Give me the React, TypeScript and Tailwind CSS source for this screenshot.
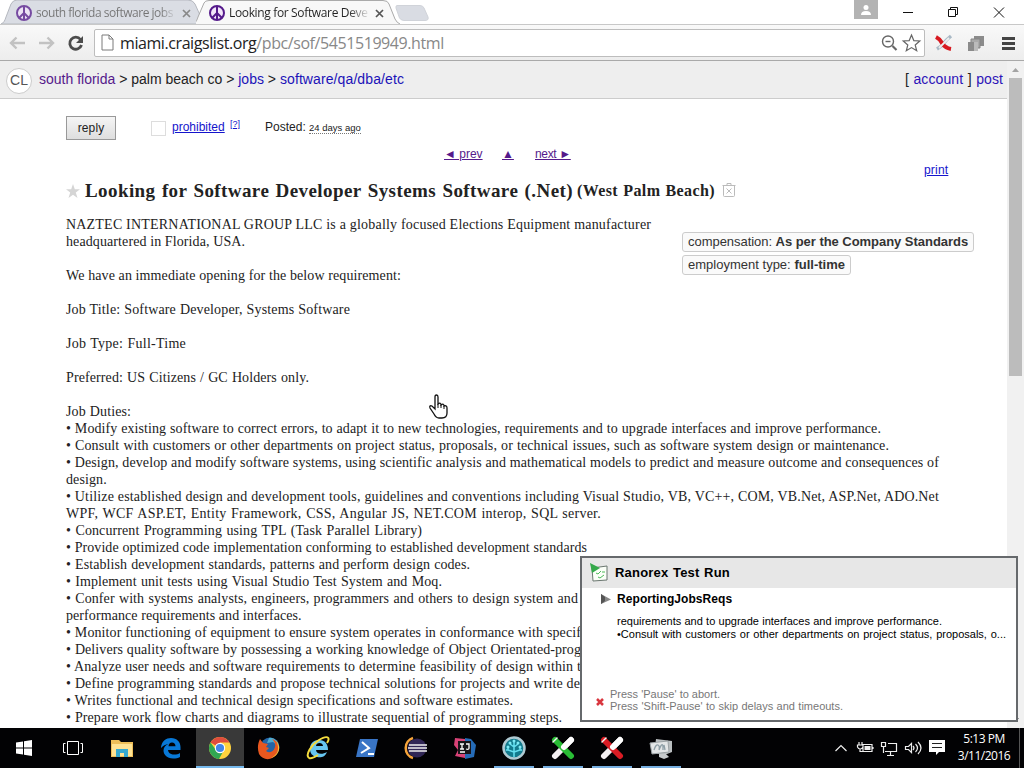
import React from "react";

const Peace = ({ faded = false }: { faded?: boolean }) => (
  <svg className={`h-4 w-4 shrink-0 ${faded ? "opacity-75" : ""}`} viewBox="0 0 16 16" fill="none" stroke="#551a8b" strokeWidth="2">
    <circle cx="8" cy="8" r="7" fill="#f3e6fa" />
    <path d="M8 1v14M8 8l-5 5M8 8l5 5" />
  </svg>
);

const TabClose = ({ color }: { color: string }) => (
  <svg className="h-[9px] w-[9px] shrink-0" viewBox="0 0 9 9" stroke={color} strokeWidth="1.7">
    <path d="M1 1l7 7M8 1l-7 7" />
  </svg>
);

const Tabs = () => (
  <div className="flex h-6 bg-white">
    <div className="relative flex h-6 w-[196px] items-center pl-4">
      <svg className="absolute top-0 left-0 h-6 w-[206px]" viewBox="0 0 206 24">
        <path d="M1 24C4 23 5 20 6 17L11 4Q13 0 17 0H188Q193 0 195 4L204 24Z" fill="#dadde4" stroke="#b5b8bf" />
      </svg>
      <div className="relative flex items-center pt-0.5">
        <Peace faded />
        <div className="ml-1 w-[141px] whitespace-nowrap bg-gradient-to-r from-[#747474] from-88% to-transparent bg-clip-text font-['Open_Sans',sans-serif] text-[12px] leading-5 tracking-[-0.47px] text-transparent">south florida software jobs</div>
        <div className="ml-[5px]"><TabClose color="#888" /></div>
      </div>
    </div>
    <div className="relative flex h-6 w-[198px] items-center pl-[13px]">
      <svg className="absolute top-0 left-0 h-6 w-[204px]" viewBox="0 0 204 24">
        <path d="M-4 24C0 23 1 20 2 17L8 3Q9 .5 13 .5H187Q192 .5 193 4L199 19Q201 23 204 24" fill="#f8f8f8" stroke="#aaa" />
      </svg>
      <div className="relative flex items-center pt-0.5">
        <Peace />
        <div className="ml-1 w-[141px] whitespace-nowrap bg-gradient-to-r from-[#222] from-85% to-transparent bg-clip-text font-['Open_Sans',sans-serif] text-[12px] leading-5 tracking-[-0.35px] text-transparent">Looking for Software Deve</div>
        <div className="ml-[5px]"><TabClose color="#555" /></div>
      </div>
    </div>
    <svg className="relative mt-[5px] h-4 w-9" viewBox="0 0 36 16">
      <path d="M3 .5H26Q29 .5 30 3L34 12Q35 15.500 31 15.500H10Q7 15.500 5.500 13L2 3Q1.500 .5 3 .5Z" fill="#d9dce3" stroke="#d0d3d9" />
    </svg>
    <div className="ml-auto flex">
      <div className="flex h-[19px] w-6 items-center justify-center bg-[#b3b3b3]">
        <svg className="h-3 w-3" viewBox="0 0 12 12" fill="#fff"><circle cx="6" cy="3.500" r="2.500" /><path d="M1 11q0-4 5-4t5 4z" /></svg>
      </div>
      <svg className="h-6 w-[146px]" viewBox="878 0 146 24" fill="none" stroke="#111">
        <path d="M903 12.500H913M948.500 9.500h7v7h-7zM950.500 9v-1.500h7v7h-1.500M994 7.500l10 10M1004 7.500l-10 10" />
      </svg>
    </div>
  </div>
);

const Toolbar = () => (
  <div className="flex h-[37px] items-center border-t border-b border-t-[#c8c8c8] border-b-[#a9a9a9] bg-gradient-to-b from-[#f9f9f9] to-[#ededed]">
    <svg className="h-9 w-[94px]" viewBox="0 24 94 36" fill="none" stroke="#c2c2c2" strokeWidth="2.400">
      <path d="M25 42H11M16.500 36.500L11 42l5.500 5.500M39 42h14M47.500 36.500L53 42l-5.500 5.500" />
      <path d="M80.500 38.500A6 6 0 1 0 81.500 44" stroke="#4c4c4c" strokeWidth="2.800" />
      <path d="M83 35v7h-7z" fill="#4c4c4c" stroke="none" />
    </svg>
    <div className="flex h-7 w-[831px] items-center rounded-[2px] border border-[#bdbdbd] bg-white pl-1.5">
      <svg className="h-[17px] w-[13px]" viewBox="0 0 13 17" fill="#fff" stroke="#7b7b7b"><path d="M1 1h7l4 4v11H1zM8 1v4h4" /></svg>
      <div className="ml-[6px] whitespace-nowrap font-['Open_Sans',sans-serif] text-[16px] leading-6 tracking-[-0.42px] text-[#888]"><span className="text-[#222]">miami.craigslist.org</span>/pbc/sof/5451519949.html</div>
      <svg className="ml-auto h-6 w-[46px]" viewBox="878 30 46 24" fill="none" stroke="#666" strokeWidth="1.400">
        <circle cx="888" cy="40.500" r="5.500" /><path d="M885.500 40.500h5" /><path d="M892.500 45l4 4" strokeWidth="2.200" />
        <path d="M911.500 34l2.300 5.600 6 .4-4.600 4 1.500 5.800-5.200-3.200-5.200 3.200 1.500-5.800-4.600-4 6-.4z" strokeWidth="1.200" />
      </svg>
    </div>
    <svg className="h-9 w-[99px]" viewBox="925 24 99 36">
      <path d="M951 35q-5 4-7 7t-7 6" fill="none" stroke="#a9b9c6" strokeWidth="3.500" />
      <path d="M936 36q4 2 6 6 3 5 9 6" fill="none" stroke="#d71920" strokeWidth="4" />
      <path d="M939 47l10-10" stroke="#eee" strokeWidth="1.800" />
      <path d="M974 35h10v10h-10z" fill="#8b8b8b" /><path d="M971 38h9v9h-9z" fill="#aaa" stroke="#858585" /><path d="M968 41h8v9h-8z" fill="#8b8b8b" /><path d="M974 41h4v9h-4z" fill="#bbb" />
      <path d="M1002 37.500h13M1002 42.500h13M1002 47.500h13" stroke="#444" strokeWidth="2.800" />
    </svg>
  </div>
);

const lines: [string, string][] = [
  ["NAZTEC INTERNATIONAL GROUP LLC is a globally focused Elections Equipment manufacturer", "w-[585px] tracking-[0.2px]"],
  ["headquartered in Florida, USA.", "w-[178px] tracking-[0.1px]"],
  ["", ""],
  ["We have an immediate opening for the below requirement:", "w-[335px] tracking-[0.1px]"],
  ["", ""],
  ["Job Title: Software Developer, Systems Software", "w-[284px] tracking-[0.15px]"],
  ["", ""],
  ["Job Type: Full-Time", "w-[120px] tracking-[0.25px]"],
  ["", ""],
  ["Preferred: US Citizens / GC Holders only.", "w-[243px] tracking-[0.1px]"],
  ["", ""],
  ["Job Duties:", "w-[65px] tracking-[0.1px]"],
  ["• Modify existing software to correct errors, to adapt it to new technologies, requirements and to upgrade interfaces and improve performance.", "w-[815px] tracking-[0.08px]"],
  ["• Consult with customers or other departments on project status, proposals, or technical issues, such as software system design or maintenance.", "w-[823px] tracking-[0.08px]"],
  ["• Design, develop and modify software systems, using scientific analysis and mathematical models to predict and measure outcome and consequences of", "w-[873px] tracking-[0.1px]"],
  ["design.", "w-[40px] tracking-[0.1px]"],
  ["• Utilize established design and development tools, guidelines and conventions including Visual Studio, VB, VC++, COM, VB.Net, ASP.Net, ADO.Net", "w-[873px] tracking-[0.15px]"],
  ["WPF, WCF ASP.ET, Entity Framework, CSS, Angular JS, NET.COM interop, SQL server.", "w-[535px] tracking-[0.25px]"],
  ["• Concurrent Programming using TPL (Task Parallel Library)", "w-[356px] tracking-[0.1px]"],
  ["• Provide optimized code implementation conforming to established development standards", "w-[521px] tracking-[0.06px]"],
  ["• Establish development standards, patterns and perform design codes.", "w-[404px] tracking-[0.08px]"],
  ["• Implement unit tests using Visual Studio Test System and Moq.", "w-[376px] tracking-[0.08px]"],
  ["• Confer with systems analysts, engineers, programmers and others to design system and", "w-[512px] tracking-[0.08px]"],
  ["performance requirements and interfaces.", "w-[235px] tracking-[0.08px]"],
  ["• Monitor functioning of equipment to ensure system operates in conformance with specifi", "w-[519px] tracking-[0.1px]"],
  ["• Delivers quality software by possessing a working knowledge of Object Orientated-prog", "w-[515px] tracking-[0.08px]"],
  ["• Analyze user needs and software requirements to determine feasibility of design within t", "w-[515px] tracking-[0.08px]"],
  ["• Define programming standards and propose technical solutions for projects and write de", "w-[514px] tracking-[0.08px]"],
  ["• Writes functional and technical design specifications and software estimates.", "w-[447px] tracking-[0.08px]"],
  ["• Prepare work flow charts and diagrams to illustrate sequential of programming steps.", "w-[496px] tracking-[0.08px]"],
];

const Posting = () => (
  <main className="h-[629px] overflow-hidden bg-white pt-[17px] pl-[66px]">
    <div className="flex h-6 items-center text-[12px]">
      <button className="h-6 w-[50px] border border-[#999] bg-gradient-to-b from-[#f5f5f5] to-[#dedede] text-[12px] tracking-[0.1px]">reply</button>
      <div className="ml-[35px] h-[15px] w-[15px] border border-[#ddd]" />
      <a className="ml-[6px] w-[55px] -translate-y-px whitespace-nowrap text-[#1414cc] underline">prohibited</a>
      <a className="ml-[3px] -translate-y-[4px] text-[9px] leading-3 text-[#1414cc] underline">[?]</a>
      <span className="ml-[25px] w-[41px] -translate-y-px whitespace-nowrap">Posted:</span>
      <span className="ml-[3px] border-b border-dotted border-[#777] text-[9.500px] leading-[11px] whitespace-nowrap">24 days ago</span>
    </div>
    <div className="mt-[6px] flex h-4 items-center pl-[378px] text-[12px] text-[#551a8b]">
      <a className="w-10 whitespace-nowrap underline">◄ prev</a>
      <a className="ml-[18px] w-3 underline">▲</a>
      <a className="ml-[21px] whitespace-nowrap underline tracking-[-0.35px]">next ►</a>
    </div>
    <div className="flex h-4 w-[883px] items-center justify-end text-[12px] text-[#1414cc]"><a className="w-[25px] tracking-[0.2px] underline">print</a></div>
    <h1 className="mt-px flex h-6 items-center whitespace-nowrap font-['Liberation_Serif',serif] font-bold text-[#222]">
      <svg className="mr-[5px] h-[15px] w-[14px]" viewBox="0 0 14 15" fill="#d5d5d5"><path d="M7 0l1.800 5.200H14L9.800 8.600 11.500 14 7 10.800 2.500 14l1.700-5.400L0 5.200h5.200z" /></svg>
      <span className="w-[488px] text-[19px] tracking-[0.42px] [text-align-last:justify]">Looking for Software Developer Systems Software (.Net)</span>
      <span className="ml-1 w-[138px] text-[16px] tracking-[0.4px] [text-align-last:justify]">(West Palm Beach)</span>
      <svg className="-mt-0.5 ml-[7px] h-4 w-[14px]" viewBox="0 0 14 16" fill="none" stroke="#bbb"><path d="M.5 3.500h13M1.500 3.500v10q0 1 1 1h9q1 0 1-1v-10M5 3V1.500h4V3M4.500 6.500l5 5M9.500 6.500l-5 5" /></svg>
    </h1>
    <section className="mt-[13px] w-[908px]">
      <div className="float-right mt-[16px] flex w-[292px] flex-col items-start gap-[3px] text-[13px] leading-[18px] whitespace-nowrap text-[#333]">
        <p className="w-[292px] rounded-[3px] border border-[#ccc] bg-[#fafafa] px-[5px] tracking-[-0.04px] [text-align-last:justify]">compensation: <b>As per the Company Standards</b></p>
        <p className="w-[169px] rounded-[3px] border border-[#ccc] bg-[#fafafa] px-[5px] [text-align-last:justify]">employment type: <b>full-time</b></p>
      </div>
      <div className="font-['Liberation_Serif',serif] text-[14px] leading-[17px] text-[#222]">
        {lines.map(([text, width], i) => (
          <p key={i} className={`h-[17px] whitespace-nowrap [text-align-last:justify] ${width}`}>{text}</p>
        ))}
      </div>
    </section>
  </main>
);

const RunPopup = () => (
  <div className="absolute top-[556px] left-[580px] h-[166px] w-[438px] border-2 border-[#66696c] bg-white text-black">
    <div className="flex h-[30px] items-center bg-[#e7e7e7] pl-2">
      <svg className="h-5 w-[19px]" viewBox="0 0 19 20"><path d="M2 5l15-2v14L3 18z" fill="#fbfff8" stroke="#6b7770" /><path d="M0 0l10 5-8 5z" fill="#35a94b" /><path d="M6 10l2 1 3-3M8 14l2 1 4-3M12 9h3" fill="none" stroke="#4dbb59" /></svg>
      <b className="ml-[6px] w-[115px] whitespace-nowrap text-[13px] tracking-[0.2px] [text-align-last:justify]">Ranorex Test Run</b>
    </div>
    <div className="flex h-[22px] items-center pl-[18px]">
      <svg className="h-[11px] w-[11px]" viewBox="0 0 11 11"><path d="M1 0l10 5.500L1 10z" fill="#888" /><path d="M1 0v10l4-3V3z" fill="#555" /></svg>
      <b className="ml-[6px] text-[12px] whitespace-nowrap tracking-[0.07px]">ReportingJobsReqs</b>
    </div>
    <div className="mt-[5px] pl-[35px] text-[11px] leading-[13px] whitespace-nowrap">
      <p className="w-[325px] [text-align-last:justify]">requirements and to upgrade interfaces and improve performance.</p>
      <p className="w-[389px] [text-align-last:justify]">•Consult with customers or other departments on project status, proposals, o...</p>
    </div>
    <div className="mt-[47px] flex items-center pl-[14px] text-[#777]">
      <svg className="mt-1 h-2 w-2" viewBox="0 0 8 8" stroke="#d9363e" strokeWidth="2.500"><path d="M1 1l6 6M7 1L1 7" /></svg>
      <div className="ml-[6px] text-[11px] leading-[12px] whitespace-nowrap">
        <p className="w-[110px] [text-align-last:justify]">Press 'Pause' to abort.</p>
        <p className="w-[233px] [text-align-last:justify]">Press 'Shift-Pause' to skip delays and timeouts.</p>
      </div>
    </div>
  </div>
);

const RanorexX = ({ color }: { color: string }) => (
  <g strokeWidth="6" strokeLinecap="round"><path d="M4 20L20 4" stroke="#f4f0f2" /><path d="M4 4l16 16" stroke={color} /><path d="M13 11l7-7" stroke="#fff" /><path d="M2 6l4-4" stroke="#f3f6f3" strokeWidth="1.500" /></g>
);

const icons: React.ReactNode[] = [
  <path d="M4 6.500l7-1v6H4zM12 5.300l8-1.300v7.500h-8zM4 12.500h7v6l-7-1zM12 12.500h8V20l-8-1.300z" fill="#fff" />,
  <path d="M6.500 5.500h11v13h-11zM4.500 7.500H2.500v9H4.500M19.500 7.500h2v9h-2" fill="none" stroke="#fff" />,
  <g><path d="M1 4h8l2 2h12v15H1z" fill="#eebf59" /><path d="M2 8h20v12H2z" fill="#ffe394" /><path d="M6 21v-8h12v8h-4v-4h-4v4z" fill="#36a9cf" /></g>,
  <path d="M2 11C3 5 7 2 12 2c6 0 9.500 4 9.500 9v3H9c.3 3 3 4.500 6 4.500 2.500 0 4.500-.7 6-1.600v4c-2 1-4 1.500-7 1.500-6 0-9.500-4-9.500-8 0-3 2-5.500 5-6.500-3 .5-5.500 1.500-7.500 4zm7.500-.8h7C16.500 8 15 6.500 13 6.500s-3.300 1.600-3.500 3.700z" fill="#0878d7" />,
  <g><circle cx="12" cy="12" r="11" fill="#ffd23e" /><path d="M12 12L2.500 6.500A11 11 0 0 1 21.500 6.500H12z" fill="#df4d3d" /><path d="M2.500 6.500A11 11 0 0 0 11 23l5-9H8z" fill="#31a752" /><circle cx="12" cy="12" r="5.200" fill="#fff" /><circle cx="12" cy="12" r="4.100" fill="#4285e8" /></g>,
  <g><circle cx="13" cy="11" r="9.500" fill="#2464a6" /><path d="M12 2c5-1 9 3 9 8l-5-4-6 1z" fill="#4cadd2" /><path d="M3 3l3 4 5 1-2 3 3 1-3 3c4 3 8 0 9-4 1-3-1-6-3-8 6 2 8 8 5 14-4 8-14 8-18 1C0 12 1 7 3 3z" fill="#e7571f" /><path d="M19 4c6 7 3 16-5 18 7-4 9-9 5-18z" fill="#ffbd32" /></g>,
  <g><path d="M4 13C4 7 8 4 13 4c6 0 9 4 9 10H10c0 4 6 5 11 2-2 5-6 6-10 5-5-1-7-4-7-8zm6-3h7c0-4-7-4-7 0z" fill="#67c5f0" /><path d="M3 22C-1 19 5 9 13 4S25 1 21 7M3 22c3 1 6-1 9-3" fill="none" stroke="#f5dc3e" strokeWidth="2" /></g>,
  <g><path d="M5 3h18l-4 18H1z" fill="#3975c6" /><path d="M7 6l7 6-8 5M13 18h6" fill="none" stroke="#fff" strokeWidth="2" /></g>,
  <g><path d="M9 2a10.500 10.500 0 0 0 0 20" fill="none" stroke="#f6a43b" strokeWidth="2.500" /><circle cx="13" cy="12" r="9.500" fill="#302655" /><path d="M5 9h18M4 12h19M5 15h18" stroke="#eee" strokeWidth="1.500" /></g>,
  <g><path d="M2 2l10 1v19L2 20l3-6-4-5z" fill="#d84277" /><path d="M12 2l6 1 5 6-2 12-9 2z" fill="#256bb7" /><path d="M5 5h13v13H5z" fill="#17151a" /><path d="M7 8h4M9 8v5M7 13h4M13 8h3v4q0 2-3 1M7 16h5" fill="none" stroke="#fff" strokeWidth="1.300" /></g>,
  <g><circle cx="12" cy="12" r="10.500" fill="#127a8d" stroke="#afcad3" strokeWidth="2.500" /><path d="M12 21V4M12 16l-6-2v-3M12 16l6-2v-3M12 11L8 8M12 11l4-3M6 14H4M18 14h2" stroke="#65dff0" strokeWidth="1.500" fill="none" /><g fill="#7ce9f5"><circle cx="12" cy="5" r="1.500" /><circle cx="8" cy="7" r="1.500" /><circle cx="16" cy="7" r="1.500" /><circle cx="6" cy="11" r="1.500" /><circle cx="18" cy="11" r="1.500" /></g></g>,
  <RanorexX color="#29bd35" />,
  <RanorexX color="#d91c24" />,
  <g><path d="M7 3l16 2v11l-5 2H5z" fill="#b9bec0" /><path d="M1 7l18-2 1 11-17 2z" fill="#e3e6e7" stroke="#9ba2a5" /><path d="M5 14q2-6 4-5t1 5M10 14q3-8 4-4v4M15 9l1 5" fill="none" stroke="#8d9ea6" strokeWidth="1.300" /><path d="M10 18h7l3 3-5 2-5-2z" fill="#c5c9cb" /></g>,
];

const Taskbar = () => (
  <footer className="flex h-10 bg-[#020204]">
    <div className="flex gap-px">
      {icons.map((icon, i) => (
        <div key={i} className={`flex h-10 w-12 flex-col items-center ${i === 4 ? "bg-[#393939]" : ""}`}>
          <svg className="mt-2 h-6 w-6 shrink-0" viewBox="0 0 24 24">{icon}</svg>
          {i === 4 && <div className="mt-auto h-0.5 w-12 shrink-0 bg-[#76b9ed]" />}
          {i > 9 && <div className="mt-auto h-0.5 w-10 shrink-0 bg-[#76aee0]" />}
        </div>
      ))}
    </div>
    <svg className="ml-auto h-10 w-[118px]" viewBox="832 728 118 40" fill="none" stroke="#eee" strokeWidth="1.200">
      <path d="M835.500 751l5.500-5.500 5.500 5.500" />
      <path d="M863 744.500h9v7h-9zM873 747v2M859 742v2.500M862 742v2.500M857.500 745h5.500v2q-1 2-2.800 2t-2.700-2zM860 749v2.500h3" /><path d="M864.500 746h6v4h-6z" fill="#eee" stroke="none" />
      <path d="M888 743.500h8.500v8H885M890.500 752v3M887 755.500h7M881.500 742.500h4v4h-4zM883.500 746v7" />
      <path d="M905.500 746.500h3l3-3v9l-3-3h-3zM913 746q2 2 0 4M915.500 744q4 4 0 8M918 742q6 6 0 12" />
      <path d="M929 740h16v12h-6l-3 3v-3h-7z" fill="#fff" stroke="none" /><path d="M932 743.500h10M932 747.500h10" stroke="#222" />
    </svg>
    <div className="flex w-[68px] flex-col items-center pt-[2px] font-['Open_Sans',sans-serif] text-[12px] leading-[17px] tracking-[-0.5px] whitespace-nowrap text-white"><span>5:13 PM</span><span>3/11/2016</span></div>
    <div className="ml-[1px] h-10 w-[5px] border-l border-[#555]" />
  </footer>
);

export default function App() {
  return (
    <div className="relative h-[768px] w-[1024px] overflow-hidden bg-white font-['Liberation_Sans',Arial,sans-serif] text-[#222]">
      <Tabs />
      <Toolbar />
      <div className="flex h-[667px]">
        <div className="w-[1007px]">
          <header className="flex h-[38px] items-center border-b border-[#ccc] bg-[#eee] pl-[6px] text-[14px]">
            <div className="mt-[2px] flex h-[26px] w-[26px] items-center justify-center rounded-full border border-[#ccc] bg-white text-[14px] text-[#555]">CL</div>
            <div className="ml-[7px] w-[365px] whitespace-nowrap [text-align-last:justify]"><a className="text-[#551a8b]">south florida</a> &gt; palm beach co &gt; <a className="text-[#1b12b8]">jobs</a> &gt; <a className="tracking-[0.1px] text-[#1b12b8]">software/qa/dba/etc</a></div>
            <div className="mr-1 ml-auto w-[98px] whitespace-nowrap [text-align-last:justify]">[ <a className="tracking-[0.1px] text-[#2c12b8]">account</a> ] <a className="tracking-[0.1px] text-[#2c12b8]">post</a></div>
          </header>
          <Posting />
        </div>
        <aside className="flex w-[17px] flex-col items-center justify-between bg-[#f1f1f1]">
          <div>
            <svg className="h-[17px] w-[17px]" viewBox="0 0 17 17"><path d="M5 11l3.500-4L12 11z" fill="#a3a3a3" /></svg>
            <div className="mx-auto h-[298px] w-[13px] bg-[#bcbcbc]" />
          </div>
          <svg className="h-[17px] w-[17px]" viewBox="0 0 17 17"><path d="M5 7l3.500 4L12 7z" fill="#555" /></svg>
        </aside>
      </div>
      <Taskbar />
      <RunPopup />
      <svg className="absolute top-[394px] left-[428px] h-[26px] w-5" viewBox="0 0 20 26"><path d="M7 15V3q0-2 1.500-2T10 3v7q3-2 3 1 3-2 3 1 3-1 3 2v5q0 5-5 5h-3q-3 0-5-4l-4-6q-1-3 2-2z" fill="#fff" stroke="#111" strokeWidth="1.300" /><path d="M10 10v4M13 11v3M16 12v3" stroke="#111" /></svg>
    </div>
  );
}
